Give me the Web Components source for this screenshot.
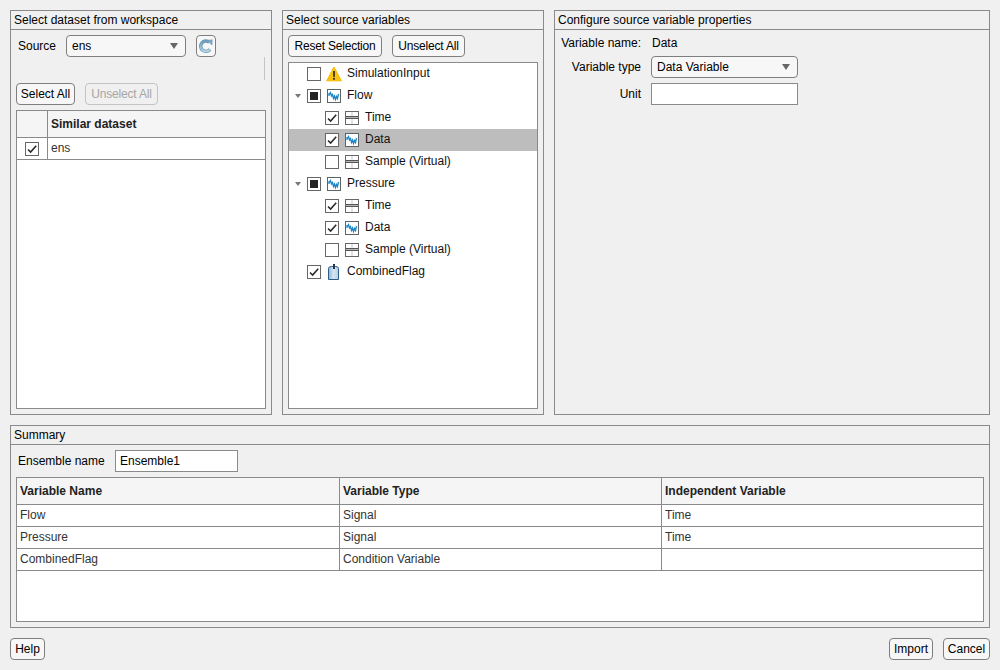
<!DOCTYPE html>
<html>
<head>
<meta charset="utf-8">
<title>New Ensemble</title>
<style>
  html, body { margin: 0; height: 100%; background: #f0f0f0; }
  body { font: 12px/14px "Liberation Sans", Arial, sans-serif; color: #000; }
</style>
</head>
<body>
<app-window>
  <ui-panel slot="left" title="Select dataset from workspace">
    <div style="display:flex;flex-direction:column;height:100%">
      <div style="display:flex;align-items:center;padding:5px 0 0 7px">
        <span style="width:48px">Source</span>
        <ui-dropdown value="ens" style="width:120px"></ui-dropdown>
        <ui-button icon style="margin-left:10px"><ui-icon name="refresh"></ui-icon></ui-button>
      </div>
      <div style="height:24px;display:flex;justify-content:flex-end;padding-right:6px">
        <div style="width:1px;height:23px;background:#c4c4c4"></div>
      </div>
      <div style="display:flex;gap:10px;padding:2px 0 0 5px">
        <ui-button style="width:59px">Select All</ui-button>
        <ui-button disabled style="width:73px;letter-spacing:-.2px">Unselect All</ui-button>
      </div>
      <ui-table columns="30px 1fr" style="margin:5px;flex:1">
        <ui-row head><span></span><span>Similar dataset</span></ui-row>
        <ui-row><ui-check state="on" style="margin-left:8px"></ui-check><span>ens</span></ui-row>
      </ui-table>
    </div>
  </ui-panel>

  <ui-panel slot="middle" title="Select source variables">
    <div style="display:flex;flex-direction:column;height:100%">
      <div style="display:flex;gap:10px;padding:5px 0 0 5px">
        <ui-button style="width:94px;letter-spacing:-.2px">Reset Selection</ui-button>
        <ui-button style="width:73px;letter-spacing:-.2px">Unselect All</ui-button>
      </div>
      <ui-tree style="margin:5px;flex:1">
        <tree-row level="1" state="off" icon="warning">SimulationInput</tree-row>
        <tree-row level="1" state="mixed" icon="signal" open>Flow</tree-row>
        <tree-row level="2" state="on" icon="table">Time</tree-row>
        <tree-row level="2" state="on" icon="signal" selected>Data</tree-row>
        <tree-row level="2" state="off" icon="table">Sample (Virtual)</tree-row>
        <tree-row level="1" state="mixed" icon="signal" open>Pressure</tree-row>
        <tree-row level="2" state="on" icon="table">Time</tree-row>
        <tree-row level="2" state="on" icon="signal">Data</tree-row>
        <tree-row level="2" state="off" icon="table">Sample (Virtual)</tree-row>
        <tree-row level="1" state="on" icon="flag">CombinedFlag</tree-row>
      </ui-tree>
    </div>
  </ui-panel>

  <ui-panel slot="right" title="Configure source variable properties">
    <div style="display:grid;grid-template-columns:86px 147px;column-gap:10px;row-gap:5px;padding:6px 0 0 0;align-items:center">
      <span style="text-align:right;height:15px">Variable name:</span><span style="margin-left:1px;height:15px">Data</span>
      <span style="text-align:right">Variable type</span><ui-dropdown value="Data Variable"></ui-dropdown>
      <span style="text-align:right">Unit</span><ui-input></ui-input>
    </div>
  </ui-panel>

  <ui-panel slot="summary" title="Summary">
    <div style="display:flex;flex-direction:column;height:100%">
      <div style="display:flex;align-items:center;padding:5px 0 0 7px">
        <span style="width:97px">Ensemble name</span>
        <ui-input value="Ensemble1" style="width:123px"></ui-input>
      </div>
      <ui-table columns="322px 322px 1fr" style="margin:5px;flex:1">
        <ui-row head><span>Variable Name</span><span>Variable Type</span><span>Independent Variable</span></ui-row>
        <ui-row><span>Flow</span><span>Signal</span><span>Time</span></ui-row>
        <ui-row><span>Pressure</span><span>Signal</span><span>Time</span></ui-row>
        <ui-row><span>CombinedFlag</span><span>Condition Variable</span><span></span></ui-row>
      </ui-table>
    </div>
  </ui-panel>

  <ui-button slot="help" style="width:35px">Help</ui-button>
  <ui-button slot="actions" style="width:44px">Import</ui-button>
  <ui-button slot="actions" style="width:47px">Cancel</ui-button>
</app-window>

<script>
// one helper so every element gets an open root the same way
function shadow(el, html) {
  el.attachShadow({ mode: 'open' });
  el.shadowRoot.innerHTML = html;
}

const ICONS = {
  warning: `<svg width="16" height="16" viewBox="0 0 16 16"><path d="M8 1 L15.3 14.8 H.7 Z" fill="#fdc40f" stroke="#f5b800" stroke-linejoin="round"/><rect x="7" y="5" width="2" height="5.8" fill="#4a4020"/><rect x="7" y="11.8" width="2" height="2" fill="#4a4020"/></svg>`,
  signal: `<svg width="14" height="14" viewBox="0 0 14 14"><rect x=".5" y=".5" width="13" height="13" fill="#fff" stroke="#5c6468"/><path d="M2 4 V7 M2 6 L3.5 3.5 L4.5 7 L5.5 5.5 L6.5 9.5 L7.5 7 L8.5 10.5 L9.5 7.5 L10.5 9.5 L11.5 5" fill="none" stroke="#1b86c6" stroke-width="1.3"/></svg>`,
  table: `<svg width="14" height="14" viewBox="0 0 14 14"><rect x=".5" y=".5" width="13" height="13" fill="#fff" stroke="#666"/><rect x="1" y="5" width="12" height="1" fill="#555"/><rect x="1" y="6" width="12" height="1" fill="#b5b5b5"/><rect x="1" y="7" width="12" height="1" fill="#555"/><rect x="6.5" y="1" width="1" height="4" fill="#c8c8c8"/><rect x="6.5" y="8" width="1" height="5" fill="#c8c8c8"/></svg>`,
  flag: `<svg width="14" height="16" viewBox="0 0 14 16"><defs><linearGradient id="f" x1="0" x2="1" y1="0" y2="0"><stop offset="0" stop-color="#8db6d6"/><stop offset=".5" stop-color="#d5e6f3"/><stop offset="1" stop-color="#b4d0e6"/></linearGradient></defs><path d="M1.5 15.5 V4.5 Q1.5 2.5 4.5 2.5 H8.5 Q11.5 2.5 11.5 4.5 V15.5 Z" fill="url(#f)" stroke="#2f5c84"/><rect x="6" y="0" width="2" height="5" fill="#23384a"/></svg>`,
  refresh: `<svg width="14" height="16" viewBox="0 0 14 16"><defs><linearGradient id="r" x1="0" x2="0" y1="0" y2="1"><stop offset="0" stop-color="#6c9cbd"/><stop offset="1" stop-color="#b9d9ec"/></linearGradient></defs><path d="M11 11.4 A5.2 5.2 0 1 1 10.2 4.2" fill="none" stroke="#6d97b3" stroke-width="3.4"/><path d="M11 11.4 A5.2 5.2 0 1 1 10.2 4.2" fill="none" stroke="url(#r)" stroke-width="1.9"/><path d="M8.2 2.4 L13.2 1.8 L13 7 Z" fill="#7fabc9" stroke="#6d97b3" stroke-width=".6"/></svg>`
};

class AppWindow extends HTMLElement {
  connectedCallback() {
    shadow(this, `
      <style>
        :host { display: flex; flex-direction: column; box-sizing: border-box; height: 670px; padding: 10px; gap: 10px; }
        .top { display: grid; grid-template-columns: 262px 262px 436px; gap: 10px; height: 405px; }
        .summary { display: grid; height: 203px; }
        .bottom { display: flex; justify-content: space-between; }
        .actions { display: flex; gap: 10px; }
      </style>
      <div class="top"><slot name="left"></slot><slot name="middle"></slot><slot name="right"></slot></div>
      <div class="summary"><slot name="summary"></slot></div>
      <div class="bottom"><slot name="help"></slot><div class="actions"><slot name="actions"></slot></div></div>
    `);
  }
}

class UiPanel extends HTMLElement {
  connectedCallback() {
    shadow(this, `
      <style>
        :host { display: flex; flex-direction: column; box-sizing: border-box; border: 1px solid #8a8a8a; min-height: 0; }
        .title { height: 18px; line-height: 19px; padding-left: 3px; border-bottom: 1px solid #8a8a8a; color: #000; flex: none; }
        .body { flex: 1; min-height: 0; }
      </style>
      <div class="title">${this.getAttribute('title')}</div>
      <div class="body"><slot></slot></div>
    `);
  }
}

class UiButton extends HTMLElement {
  connectedCallback() {
    shadow(this, `
      <style>
        :host { display: inline-flex; align-items: center; justify-content: center; box-sizing: border-box; height: 22px;
                border: 1px solid #7f7f7f; border-radius: 4px; background: #f7f7f7; white-space: nowrap; }
        :host([disabled]) { color: #a6a6a6; border-color: #c4c4c4; background: #f0f0f0; }
        :host([icon]) { width: 20px; }
      </style>
      <slot></slot>
    `);
  }
}

class UiIcon extends HTMLElement {
  connectedCallback() {
    shadow(this, `<style>:host { display: inline-flex; } svg { display: block; flex: none; }</style>${ICONS[this.getAttribute('name')] || ''}`);
  }
}

class UiDropdown extends HTMLElement {
  connectedCallback() {
    shadow(this, `
      <style>
        :host { display: flex; align-items: center; justify-content: space-between; box-sizing: border-box; height: 22px; padding: 0 7px 0 5px;
                border: 1px solid #7f7f7f; border-radius: 4px; background: #f7f7f7; }
        i { width: 0; height: 0; border-left: 4px solid transparent; border-right: 4px solid transparent; border-top: 6px solid #666; }
      </style>
      <span>${this.getAttribute('value')}</span><i></i>
    `);
  }
}

class UiInput extends HTMLElement {
  connectedCallback() {
    shadow(this, `
      <style>
        :host { display: flex; align-items: center; box-sizing: border-box; height: 22px; padding: 0 4px 1px; border: 1px solid #8a8a8a; background: #fff; }
      </style>
      <span>${this.getAttribute('value') || ''}</span>
    `);
  }
}

class UiCheck extends HTMLElement {
  connectedCallback() {
    const state = this.getAttribute('state');
    let mark = '';
    if (state === 'on') mark = '<path d="M3 7.5 L5.6 10 L11.2 3.8" fill="none" stroke="#2a2a2a" stroke-width="1.6"/>';
    if (state === 'mixed') mark = '<rect x="3" y="3" width="8" height="8" fill="#222"/>';
    shadow(this, `
      <style>:host { display: inline-flex; flex: none; } svg { display: block; }</style>
      <svg width="14" height="14" viewBox="0 0 14 14"><rect x=".5" y=".5" width="13" height="13" fill="#fff" stroke="#666"/>${mark}</svg>
    `);
  }
}

class UiTree extends HTMLElement {
  connectedCallback() {
    shadow(this, `
      <style>:host { display: block; box-sizing: border-box; border: 1px solid #8a8a8a; background: #fff; }</style>
      <slot></slot>
    `);
  }
}

class TreeRow extends HTMLElement {
  connectedCallback() {
    const level = Number(this.getAttribute('level'));
    shadow(this, `
      <style>
        :host { display: flex; align-items: center; height: 22px; padding-left: ${level === 1 ? 5 : 23}px; color: #111; }
        :host([selected]) { background: #bdbdbd; }
        .arrow { width: 12px; flex: none; padding-left: 1px; }
        .arrow i { display: block; width: 0; height: 0; border-left: 3.5px solid transparent; border-right: 3.5px solid transparent; border-top: 4px solid #777; }
        ui-check { margin-right: 6px; }
        ui-icon { width: 14px; margin-right: 6px; justify-content: center; }
        .text { padding-bottom: 2px; }
      </style>
      <span class="arrow">${this.hasAttribute('open') ? '<i></i>' : ''}</span>
      <ui-check state="${this.getAttribute('state')}"></ui-check>
      <ui-icon name="${this.getAttribute('icon')}"></ui-icon>
      <span class="text"><slot></slot></span>
    `);
  }
}

class UiTable extends HTMLElement {
  connectedCallback() {
    this.style.setProperty('--cols', this.getAttribute('columns'));
    shadow(this, `
      <style>:host { display: block; box-sizing: border-box; border: 1px solid #8a8a8a; background: #fff; }</style>
      <slot></slot>
    `);
  }
}

class UiRow extends HTMLElement {
  connectedCallback() {
    shadow(this, `
      <style>
        :host { display: grid; grid-template-columns: var(--cols); height: 22px; box-sizing: border-box; border-bottom: 1px solid #8a8a8a; color: #333; }
        :host([head]) { height: 27px; background: #f5f5f5; font-weight: bold; color: #222; }
        ::slotted(*) { display: flex; align-items: center; padding: 0 0 2px 3px; border-left: 1px solid #8a8a8a; }
        :host([head]) ::slotted(*) { padding-bottom: 0; }
        ::slotted(:first-child) { border-left: 0; }
        ::slotted(ui-check) { padding: 0; border-left: 0; align-self: center; }
      </style>
      <slot></slot>
    `);
  }
}

customElements.define('app-window', AppWindow);
customElements.define('ui-panel', UiPanel);
customElements.define('ui-button', UiButton);
customElements.define('ui-icon', UiIcon);
customElements.define('ui-dropdown', UiDropdown);
customElements.define('ui-input', UiInput);
customElements.define('ui-check', UiCheck);
customElements.define('ui-tree', UiTree);
customElements.define('tree-row', TreeRow);
customElements.define('ui-table', UiTable);
customElements.define('ui-row', UiRow);
</script>
</body>
</html>
